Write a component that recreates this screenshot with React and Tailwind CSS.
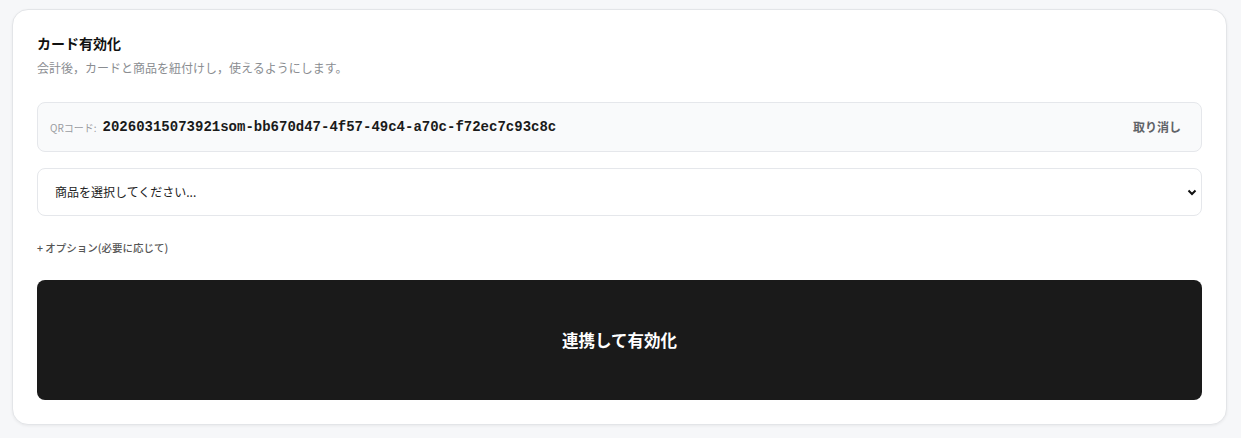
import React from "react";

export default function App() {
  const jp = { fontFamily: '"Noto Sans CJK JP", "Noto Sans", sans-serif' };
  return (
    <div className="min-h-[438px] bg-[#f6f7f9] pl-3 pr-[14px] pt-[9px] pb-[13px]" style={jp}>
      <div className="rounded-2xl border border-[#e3e5e8] bg-white px-6 pt-[23px] pb-6 shadow-[0_1px_3px_rgba(0,0,0,0.06)]">
        <h2 className="text-[14px] font-bold leading-5 text-[#111]">カード有効化</h2>
        <p className="mt-[6px] text-[12px] leading-[18px] text-[#8a8d91]">
          会計後，カードと商品を紐付けし，使えるようにします。
        </p>

        <div className="mt-[25px] flex h-[50px] items-center rounded-lg border border-[#e5e7eb] bg-[#f9fafb] pl-3 pr-5">
          <span className="text-[10px] text-[#9a9ca1]">QRコード:</span>
          <span
            className="ml-[6px] text-[14px] font-bold text-[#1a1a1a]"
            style={{ fontFamily: '"Liberation Mono", "DejaVu Sans Mono", monospace' }}
          >
            20260315073921som-bb670d47-4f57-49c4-a70c-f72ec7c93c8c
          </span>
          <button className="ml-auto text-[12px] font-semibold text-[#5f6368]">取り消し</button>
        </div>

        <div className="relative mt-4">
          <select
            className="h-12 w-full appearance-none rounded-lg border border-[#e5e7eb] bg-white pl-[17px] text-[12px] text-[#222] outline-none"
            style={jp}
            defaultValue=""
          >
            <option value="">商品を選択してください...</option>
          </select>
          <svg
            className="pointer-events-none absolute right-[5px] top-1/2 -translate-y-1/2"
            width="10"
            height="8"
            viewBox="0 0 10 8"
          >
            <path d="M1.5 2.5 L5 6 L8.5 2.5" fill="none" stroke="#111" strokeWidth="2" />
          </svg>
        </div>

        <div className="mt-6 text-[10.5px] font-medium leading-4 text-[#555]">+ オプション(必要に応じて)</div>

        <button className="mt-6 flex h-[120px] w-full items-center justify-center rounded-lg bg-[#1a1a1a] text-[16.5px] font-bold text-white">
          連携して有効化
        </button>
      </div>
    </div>
  );
}
